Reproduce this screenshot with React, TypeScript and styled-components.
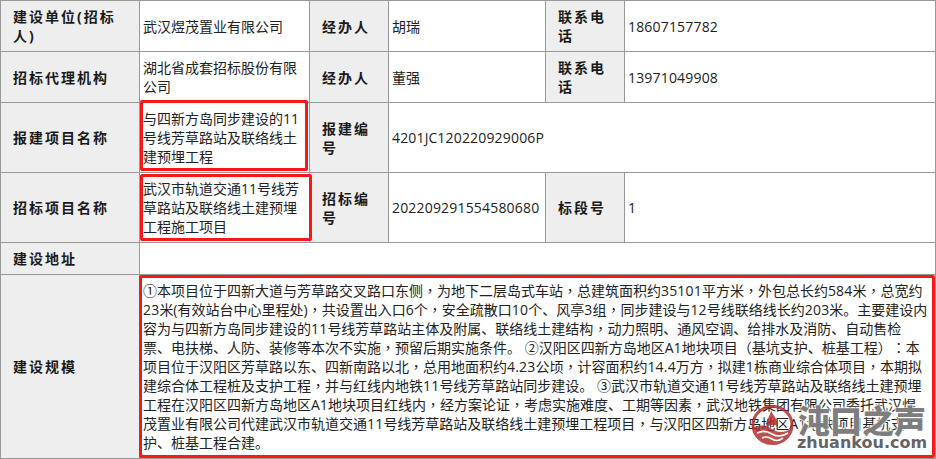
import styled, { createGlobalStyle } from "styled-components";

const GlobalStyle = createGlobalStyle`
  html, body {
    margin: 0;
    padding: 0;
    background: #fff;
  }
  body {
    font-family: "Open Sans", "Noto Sans CJK SC", sans-serif;
    font-size: 14px;
    color: #222;
    text-spacing-trim: space-all;
  }
`;

const Sheet = styled.div`
  position: relative;
  width: 936px;
  height: 459px;
  overflow: hidden;
`;

const Table = styled.table`
  width: 936px;
  height: 459px;
  table-layout: fixed;
  border-collapse: collapse;

  td, th {
    border: 1px solid #999;
  }
`;

const Row = styled.tr<{ $h: number }>`
  height: ${(p) => p.$h}px;
`;

const Label = styled.th`
  padding: 0 8px 0 12px;
  background: #eee;
  color: #1a1a1a;
  font-size: 14px;
  font-weight: 700;
  letter-spacing: 2px;
  line-height: 19px;
  text-align: left;
`;

const Value = styled.td`
  position: relative;
  padding: 0 3px;
  background: #fff;
  line-height: 19px;
  word-break: break-all;
`;

const Num = styled.span`
  letter-spacing: 0.18px;
`;

const Punct = styled.span`
  font-family: "Noto Sans CJK TC", sans-serif;
`;

const RedBox = styled.span<{ $l: number; $t: number; $r: number; $b: number }>`
  position: absolute;
  left: ${(p) => p.$l}px;
  top: ${(p) => p.$t}px;
  right: ${(p) => p.$r}px;
  bottom: ${(p) => p.$b}px;
  border: 3px solid #f5191a;
  border-radius: 2px;
  pointer-events: none;
`;

const Watermark = styled.div`
  position: absolute;
  left: 751px;
  top: 403px;
  width: 176px;
  height: 48px;
  pointer-events: none;
`;

const Logo = styled.svg`
  position: absolute;
  left: 0;
  top: 2px;
  opacity: 0.85;
`;

const BrandName = styled.span`
  position: absolute;
  left: 47px;
  top: -4px;
  font-family: "Noto Sans CJK SC", sans-serif;
  font-size: 32px;
  line-height: 40px;
  font-weight: 900;
  color: rgba(90, 90, 90, 0.8);
  text-shadow: 0 0 2px #fff, 0 0 2px #fff, 0 0 3px #fff;
  white-space: nowrap;
`;

const BrandUrl = styled.span`
  position: absolute;
  left: 46px;
  top: 31px;
  font-family: "DejaVu Sans", sans-serif;
  font-size: 16px;
  line-height: 18px;
  font-weight: 700;
  color: rgba(90, 90, 90, 0.95);
  text-shadow: 0 0 2px #fff;
  white-space: nowrap;
`;

const scaleLines = [
  "①本项目位于四新大道与芳草路交叉路口东侧，为地下二层岛式车站，总建筑面积约35101平方米，外包总长约584米，总宽约",
  "23米(有效站台中心里程处)，共设置出入口6个，安全疏散口10个、风亭3组，同步建设与12号线联络线长约203米。主要建设内",
  "容为与四新方岛同步建设的11号线芳草路站主体及附属、联络线土建结构，动力照明、通风空调、给排水及消防、自动售检",
  "票、电扶梯、人防、装修等本次不实施，预留后期实施条件。 ②汉阳区四新方岛地区A1地块项目（基坑支护、桩基工程）：本",
  "项目位于汉阳区芳草路以东、四新南路以北，总用地面积约4.23公顷，计容面积约14.4万方，拟建1栋商业综合体项目，本期拟",
  "建综合体工程桩及支护工程，并与红线内地铁11号线芳草路站同步建设。 ③武汉市轨道交通11号线芳草路站及联络线土建预埋",
  "工程在汉阳区四新方岛地区A1地块项目红线内，经方案论证，考虑实施难度、工期等因素，武汉地铁集团有限公司委托武汉煜",
  "茂置业有限公司代建武汉市轨道交通11号线芳草路站及联络线土建预埋工程项目，与汉阳区四新方岛地区A1地块项目基坑支",
  "护、桩基工程合建。",
];

// commas and parens sit centred in the cell in the source, digits run a bit wide
function Rich({ text }: { text: string }) {
  const parts = text.split(/([，：（）]|[\d.]+)/).filter(Boolean);
  return (
    <>
      {parts.map((part, i) =>
        /^[，：（）]$/.test(part) ? (
          <Punct key={i}>{part}</Punct>
        ) : /^[\d.]+$/.test(part) ? (
          <Num key={i}>{part}</Num>
        ) : (
          part
        )
      )}
    </>
  );
}

export default function App() {
  return (
    <Sheet>
      <GlobalStyle />
      <Table>
        <colgroup>
          <col style={{ width: 139 }} />
          <col style={{ width: 170 }} />
          <col style={{ width: 79 }} />
          <col style={{ width: 157 }} />
          <col style={{ width: 79 }} />
          <col style={{ width: 311 }} />
        </colgroup>
        <tbody>
          <Row $h={51}>
            <Label>建设单位(招标人)</Label>
            <Value>武汉煜茂置业有限公司</Value>
            <Label>经办人</Label>
            <Value>胡瑞</Value>
            <Label>联系电话</Label>
            <Value>
              <Rich text="18607157782" />
            </Value>
          </Row>
          <Row $h={51}>
            <Label>招标代理机构</Label>
            <Value>湖北省成套招标股份有限公司</Value>
            <Label>经办人</Label>
            <Value>董强</Value>
            <Label>联系电话</Label>
            <Value>
              <Rich text="13971049908" />
            </Value>
          </Row>
          <Row $h={70}>
            <Label>报建项目名称</Label>
            <Value>
              与四新方岛同步建设的11号线芳草路站及联络线土建预埋工程
              <RedBox $l={0} $t={-3} $r={1} $b={1} />
            </Value>
            <Label>报建编号</Label>
            <Value colSpan={3}>
              <Rich text="4201" />
              JC
              <Rich text="120220929006" />P
            </Value>
          </Row>
          <Row $h={70}>
            <Label>招标项目名称</Label>
            <Value>
              武汉市轨道交通11号线芳草路站及联络线土建预埋工程施工项目
              <RedBox $l={0} $t={1} $r={-3} $b={1} />
            </Value>
            <Label>招标编号</Label>
            <Value>
              <Rich text="202209291554580680" />
            </Value>
            <Label>标段号</Label>
            <Value>1</Value>
          </Row>
          <Row $h={32}>
            <Label>建设地址</Label>
            <Value colSpan={5} />
          </Row>
          <Row $h={184}>
            <Label>建设规模</Label>
            <Value colSpan={5}>
              {scaleLines.map((line, i) => (
                <div key={i}>
                  <Rich text={line} />
                </div>
              ))}
              <RedBox $l={-1} $t={0} $r={0} $b={0} />
            </Value>
          </Row>
        </tbody>
      </Table>
      <Watermark>
        <Logo width="43" height="40" viewBox="0 0 43 40">
          <ellipse cx="21.5" cy="20" rx="19.5" ry="18.5" fill="none" stroke="#b3312e" strokeWidth="3" />
          <path d="M20 5c2 6 8 10 7 17-3-3-7-3-11 0-2-6 3-10 4-17z" fill="#b3312e" />
          <path d="M2 23c7-4 13-3 19 1s13 4 20-1c-1 10-9 16-19.500 16S3 33 2 23z" fill="#b3312e" />
          <path d="M6 28c6-3 10-2 15 1s10 3 16-1M11 33c4-2 7-1 10 1s7 2 11-1" fill="none" stroke="#fff" strokeWidth="1.600" />
        </Logo>
        <BrandName>沌口之声</BrandName>
        <BrandUrl>zhuankou.com</BrandUrl>
      </Watermark>
    </Sheet>
  );
}
